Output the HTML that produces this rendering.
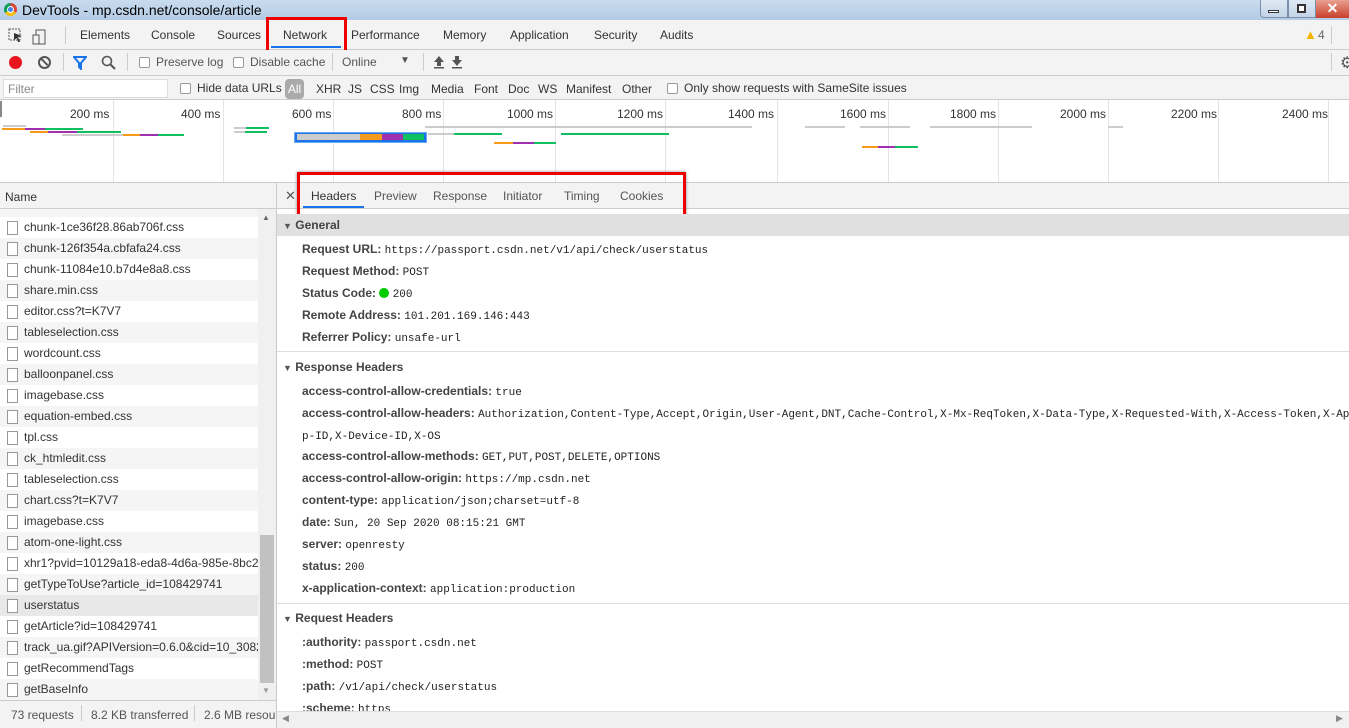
<!DOCTYPE html>
<html><head><meta charset="utf-8"><style>
*{margin:0;padding:0;box-sizing:border-box}
body{width:1349px;height:728px;overflow:hidden;position:relative;font-family:"Liberation Sans",sans-serif;font-size:12px;color:#333;background:#fff}
.a{position:absolute;white-space:nowrap}
.k{font-weight:bold;color:#444}
.m{font-family:"Liberation Mono",monospace;font-size:11px;color:#222;font-weight:normal}
.row{position:absolute;left:0;width:258px;height:21px;line-height:21px;padding-left:24px;white-space:nowrap;overflow:hidden}
.row i{position:absolute;left:7px;top:4px;width:11px;height:14px;border:1px solid #999;background:#fff}
.g{position:absolute;top:100px;width:1px;height:82px;background:#e4e4e4}
.lab{position:absolute;top:107px;font-size:12px;color:#333}
.bar{position:absolute;height:2px}
.cb{display:inline-block;width:11px;height:11px;border:1px solid #999;border-radius:2px;background:#fff;vertical-align:-2px;margin-right:6px}
</style></head><body>
<div class="a" style="left:0;top:0;width:1349px;height:20px;background:linear-gradient(#c9dcef,#b3cbe5)"></div>
<div class="a" style="left:4px;top:3px;width:13px;height:13px;border-radius:50%;background:conic-gradient(#db4437 0 33%,#f4c20d 0 66%,#0f9d58 0)"></div>
<div class="a" style="left:8px;top:7px;width:5px;height:5px;border-radius:50%;background:#4285f4;outline:1px solid #fff"></div>
<div class="a" style="left:22px;top:2px;font-size:14px;color:#000">DevTools - mp.csdn.net/console/article</div>
<div class="a" style="left:1260px;top:0;width:28px;height:18px;border:1px solid #7a8fa8;border-top:none;border-radius:0 0 0 4px;background:linear-gradient(#dfe9f5,#c3d3e6)"></div>
<div class="a" style="left:1268px;top:10px;width:11px;height:3px;border:1px solid #333;background:#fff"></div>
<div class="a" style="left:1288px;top:0;width:28px;height:18px;border:1px solid #7a8fa8;border-top:none;background:linear-gradient(#dfe9f5,#c3d3e6)"></div>
<div class="a" style="left:1297px;top:4px;width:9px;height:9px;border:2px solid #333;background:#fff"></div>
<div class="a" style="left:1316px;top:0;width:33px;height:18px;background:linear-gradient(#e9a091,#c9402a);color:#fff;font-weight:bold;font-size:14px;text-align:center;line-height:16px">✕</div>
<div class="a" style="left:0;top:20px;width:1349px;height:30px;background:#f3f3f3;border-bottom:1px solid #ccc"></div>
<svg class="a" style="left:8px;top:27px" width="42" height="18"><rect x="1" y="2" width="11" height="11" fill="none" stroke="#555" stroke-dasharray="2 1"/><path d="M6 6 L14 9 L10 10 L12 15 L10 15 L9 11 L6 13Z" fill="#333"/><rect x="28" y="3" width="9" height="14" fill="none" stroke="#555"/><rect x="25" y="8" width="6" height="9" fill="#f3f3f3" stroke="#555"/></svg>
<div class="a" style="left:65px;top:26px;width:1px;height:18px;background:#ccc"></div>
<div class="a" style="left:80px;top:28px">Elements</div>
<div class="a" style="left:151px;top:28px">Console</div>
<div class="a" style="left:217px;top:28px">Sources</div>
<div class="a" style="left:283px;top:28px">Network</div>
<div class="a" style="left:271px;top:46px;width:70px;height:2px;background:#1a73e8"></div>
<div class="a" style="left:351px;top:28px">Performance</div>
<div class="a" style="left:443px;top:28px">Memory</div>
<div class="a" style="left:510px;top:28px">Application</div>
<div class="a" style="left:594px;top:28px">Security</div>
<div class="a" style="left:660px;top:28px">Audits</div>
<div class="a" style="left:1304px;top:27px;color:#f4b400;font-size:13px">▲</div>
<div class="a" style="left:1318px;top:28px;color:#666">4</div>
<div class="a" style="left:1331px;top:26px;width:1px;height:18px;background:#ccc"></div>
<div class="a" style="left:266px;top:17px;width:81px;height:38px;border:3px solid #e00"></div>
<div class="a" style="left:0;top:50px;width:1349px;height:26px;background:#f3f3f3;border-bottom:1px solid #ccc"></div>
<div class="a" style="left:9px;top:56px;width:13px;height:13px;border-radius:50%;background:#e8141e"></div>
<div class="a" style="left:38px;top:56px;width:13px;height:13px;border-radius:50%;border:2px solid #555"></div>
<div class="a" style="left:40px;top:61px;width:9px;height:2px;background:#555;transform:rotate(45deg)"></div>
<div class="a" style="left:63px;top:53px;width:1px;height:18px;background:#ccc"></div>
<svg class="a" style="left:73px;top:56px" width="14" height="14"><path d="M1 1H13L8 7V13L6 11V7Z" fill="none" stroke="#1a73e8" stroke-width="2"/></svg>
<svg class="a" style="left:101px;top:55px" width="15" height="15"><circle cx="6" cy="6" r="4.5" fill="none" stroke="#555" stroke-width="1.6"/><path d="M9 9L14 14" stroke="#555" stroke-width="2"/></svg>
<div class="a" style="left:127px;top:53px;width:1px;height:18px;background:#ccc"></div>
<div class="a" style="left:139px;top:55px;color:#555"><span class="cb"></span>Preserve log</div>
<div class="a" style="left:233px;top:55px;color:#555"><span class="cb"></span>Disable cache</div>
<div class="a" style="left:332px;top:53px;width:1px;height:18px;background:#ccc"></div>
<div class="a" style="left:342px;top:55px;color:#555">Online</div>
<div class="a" style="left:400px;top:55px;color:#555;font-size:10px">▼</div>
<div class="a" style="left:423px;top:53px;width:1px;height:18px;background:#ccc"></div>
<svg class="a" style="left:433px;top:55px" width="32" height="14"><path d="M6 1L11 7H8V11H4V7H1Z" fill="#555"/><rect x="1" y="12" width="10" height="1.5" fill="#555"/><path d="M24 11L19 5H22V1H26V5H29Z" fill="#555"/><rect x="19" y="12" width="10" height="1.5" fill="#555"/></svg>
<div class="a" style="left:1331px;top:53px;width:1px;height:18px;background:#ccc"></div>
<div class="a" style="left:1340px;top:53px;font-size:16px;color:#555">⚙</div>
<div class="a" style="left:0;top:76px;width:1349px;height:24px;background:#f3f3f3;border-bottom:1px solid #ccc"></div>
<div class="a" style="left:3px;top:79px;width:165px;height:19px;background:#fff;border:1px solid #ddd;color:#888;padding:3px 4px;line-height:13px">Filter</div>
<div class="a" style="left:180px;top:81px"><span class="cb"></span>Hide data URLs</div>
<div class="a" style="left:285px;top:79px;width:19px;height:20px;border-radius:4px;background:#aaa;color:#fff;text-align:center;line-height:20px">All</div>
<div class="a" style="left:316px;top:82px">XHR</div>
<div class="a" style="left:348px;top:82px">JS</div>
<div class="a" style="left:370px;top:82px">CSS</div>
<div class="a" style="left:399px;top:82px">Img</div>
<div class="a" style="left:431px;top:82px">Media</div>
<div class="a" style="left:474px;top:82px">Font</div>
<div class="a" style="left:508px;top:82px">Doc</div>
<div class="a" style="left:538px;top:82px">WS</div>
<div class="a" style="left:566px;top:82px">Manifest</div>
<div class="a" style="left:622px;top:82px">Other</div>
<div class="a" style="left:667px;top:81px"><span class="cb"></span>Only show requests with SameSite issues</div>
<div class="a" style="left:0;top:101px;width:2px;height:16px;background:#888"></div>
<div class="g" style="left:113px"></div><div class="g" style="left:223px"></div><div class="g" style="left:333px"></div><div class="g" style="left:443px"></div><div class="g" style="left:555px"></div><div class="g" style="left:665px"></div><div class="g" style="left:777px"></div><div class="g" style="left:888px"></div><div class="g" style="left:998px"></div><div class="g" style="left:1108px"></div><div class="g" style="left:1218px"></div><div class="g" style="left:1328px"></div>
<div class="lab" style="left:70px">200 ms</div><div class="lab" style="left:181px">400 ms</div><div class="lab" style="left:292px">600 ms</div><div class="lab" style="left:402px">800 ms</div><div class="lab" style="left:507px">1000 ms</div><div class="lab" style="left:617px">1200 ms</div><div class="lab" style="left:728px">1400 ms</div><div class="lab" style="left:840px">1600 ms</div><div class="lab" style="left:950px">1800 ms</div><div class="lab" style="left:1060px">2000 ms</div><div class="lab" style="left:1171px">2200 ms</div><div class="lab" style="left:1282px">2400 ms</div>
<div class="bar" style="left:3px;top:125px;width:23px;background:#ccc"></div>
<div class="bar" style="left:2px;top:128px;width:23px;background:#f59a1a"></div><div class="bar" style="left:25px;top:128px;width:20px;background:#a030b0"></div><div class="bar" style="left:45px;top:128px;width:38px;background:#10c060"></div>
<div class="bar" style="left:30px;top:131px;width:18px;background:#f59a1a"></div><div class="bar" style="left:48px;top:131px;width:29px;background:#a030b0"></div><div class="bar" style="left:77px;top:131px;width:44px;background:#10c060"></div>
<div class="bar" style="left:62px;top:134px;width:61px;background:#ccc"></div><div class="bar" style="left:123px;top:134px;width:17px;background:#f59a1a"></div><div class="bar" style="left:140px;top:134px;width:18px;background:#a030b0"></div><div class="bar" style="left:158px;top:134px;width:26px;background:#10c060"></div>
<div class="bar" style="left:234px;top:127px;width:12px;background:#ccc"></div><div class="bar" style="left:246px;top:127px;width:23px;background:#10c060"></div>
<div class="bar" style="left:234px;top:131px;width:11px;background:#ccc"></div><div class="bar" style="left:245px;top:131px;width:22px;background:#10c060"></div>
<div class="bar" style="left:425px;top:126px;width:327px;background:#ccc"></div>
<div class="bar" style="left:805px;top:126px;width:40px;background:#ccc"></div><div class="bar" style="left:860px;top:126px;width:50px;background:#ccc"></div><div class="bar" style="left:930px;top:126px;width:102px;background:#ccc"></div><div class="bar" style="left:1108px;top:126px;width:15px;background:#ccc"></div>
<div class="a" style="left:294px;top:132px;width:133px;height:11px;background:#1a73e8;border:1px solid #6aa8f0"></div>
<div class="a" style="left:297px;top:134px;width:63px;height:6px;background:#ccc"></div><div class="a" style="left:360px;top:134px;width:22px;height:6px;background:#f59a1a"></div><div class="a" style="left:382px;top:134px;width:21px;height:6px;background:#a030b0"></div><div class="a" style="left:403px;top:134px;width:21px;height:6px;background:#10c060"></div>
<div class="bar" style="left:428px;top:133px;width:26px;background:#ccc"></div><div class="bar" style="left:454px;top:133px;width:48px;background:#10c060"></div>
<div class="bar" style="left:561px;top:133px;width:108px;background:#10c060"></div>
<div class="bar" style="left:494px;top:142px;width:19px;background:#f59a1a"></div><div class="bar" style="left:513px;top:142px;width:21px;background:#a030b0"></div><div class="bar" style="left:534px;top:142px;width:22px;background:#10c060"></div>
<div class="bar" style="left:862px;top:146px;width:16px;background:#f59a1a"></div><div class="bar" style="left:878px;top:146px;width:17px;background:#a030b0"></div><div class="bar" style="left:895px;top:146px;width:23px;background:#10c060"></div>
<div class="a" style="left:0;top:182px;width:1349px;height:1px;background:#ccc"></div>
<div class="row" style="top:205px;height:12px;background:#f5f5f5"></div>
<div class="a" style="left:0;top:183px;width:276px;height:26px;background:#f3f3f3;border-bottom:1px solid #ccc"></div>
<div class="a" style="left:5px;top:190px">Name</div>
<div class="a" style="left:276px;top:183px;width:1px;height:545px;background:#ccc"></div>
<div class="row" style="top:217px;background:#fff"><i></i>chunk-1ce36f28.86ab706f.css</div>
<div class="row" style="top:238px;background:#f5f5f5"><i></i>chunk-126f354a.cbfafa24.css</div>
<div class="row" style="top:259px;background:#fff"><i></i>chunk-11084e10.b7d4e8a8.css</div>
<div class="row" style="top:280px;background:#f5f5f5"><i></i>share.min.css</div>
<div class="row" style="top:301px;background:#fff"><i></i>editor.css?t=K7V7</div>
<div class="row" style="top:322px;background:#f5f5f5"><i></i>tableselection.css</div>
<div class="row" style="top:343px;background:#fff"><i></i>wordcount.css</div>
<div class="row" style="top:364px;background:#f5f5f5"><i></i>balloonpanel.css</div>
<div class="row" style="top:385px;background:#fff"><i></i>imagebase.css</div>
<div class="row" style="top:406px;background:#f5f5f5"><i></i>equation-embed.css</div>
<div class="row" style="top:427px;background:#fff"><i></i>tpl.css</div>
<div class="row" style="top:448px;background:#f5f5f5"><i></i>ck_htmledit.css</div>
<div class="row" style="top:469px;background:#fff"><i></i>tableselection.css</div>
<div class="row" style="top:490px;background:#f5f5f5"><i></i>chart.css?t=K7V7</div>
<div class="row" style="top:511px;background:#fff"><i></i>imagebase.css</div>
<div class="row" style="top:532px;background:#f5f5f5"><i></i>atom-one-light.css</div>
<div class="row" style="top:553px;background:#fff"><i></i>xhr1?pvid=10129a18-eda8-4d6a-985e-8bc2</div>
<div class="row" style="top:574px;background:#f5f5f5"><i></i>getTypeToUse?article_id=108429741</div>
<div class="row" style="top:595px;background:#e8e8e8"><i></i>userstatus</div>
<div class="row" style="top:616px;background:#fff"><i></i>getArticle?id=108429741</div>
<div class="row" style="top:637px;background:#f5f5f5"><i></i>track_ua.gif?APIVersion=0.6.0&amp;cid=10_3082</div>
<div class="row" style="top:658px;background:#fff"><i></i>getRecommendTags</div>
<div class="row" style="top:679px;background:#f5f5f5"><i></i>getBaseInfo</div>
<div class="a" style="left:258px;top:209px;width:18px;height:491px;background:#f0f0f0"></div>
<div class="a" style="left:262px;top:213px;font-size:8px;color:#666">▲</div>
<div class="a" style="left:262px;top:686px;font-size:8px;color:#999">▼</div>
<div class="a" style="left:260px;top:535px;width:14px;height:148px;background:#c1c1c1"></div>
<div class="a" style="left:0;top:700px;width:276px;height:28px;background:#f3f3f3;border-top:1px solid #ccc"></div>
<div class="a" style="left:11px;top:708px;color:#555">73 requests</div>
<div class="a" style="left:81px;top:705px;width:1px;height:16px;background:#ccc"></div>
<div class="a" style="left:91px;top:708px;color:#555">8.2 KB transferred</div>
<div class="a" style="left:194px;top:705px;width:1px;height:16px;background:#ccc"></div>
<div class="a" style="left:204px;top:708px;color:#555;width:72px;overflow:hidden">2.6 MB resources</div>
<div class="a" style="left:277px;top:183px;width:1072px;height:26px;background:#f3f3f3;border-bottom:1px solid #ccc"></div>
<div class="a" style="left:285px;top:188px;color:#555;font-size:13px">✕</div>
<div class="a" style="left:311px;top:189px">Headers</div>
<div class="a" style="left:303px;top:206px;width:61px;height:2px;background:#1a73e8"></div>
<div class="a" style="left:374px;top:189px;color:#555">Preview</div>
<div class="a" style="left:433px;top:189px;color:#555">Response</div>
<div class="a" style="left:503px;top:189px;color:#555">Initiator</div>
<div class="a" style="left:564px;top:189px;color:#555">Timing</div>
<div class="a" style="left:620px;top:189px;color:#555">Cookies</div>
<div class="a" style="left:297px;top:172px;width:389px;height:47px;border:3px solid #e00;box-shadow:0 0 3px #888"></div>
<div class="a" style="left:277px;top:214px;width:1072px;height:22px;background:#e0e0e0"></div>
<div class="a k" style="left:283px;top:218px"><span style="font-size:9px;color:#555">▼</span> General</div>
<div class="a k" style="left:302px;top:242px">Request URL: <span class="m">https://passport.csdn.net/v1/api/check/userstatus</span></div>
<div class="a k" style="left:302px;top:264px">Request Method: <span class="m">POST</span></div>
<div class="a k" style="left:302px;top:286px">Status Code: <span style="display:inline-block;width:10px;height:10px;border-radius:50%;background:#0c0;vertical-align:-1px"></span> <span class="m">200</span></div>
<div class="a k" style="left:302px;top:308px">Remote Address: <span class="m">101.201.169.146:443</span></div>
<div class="a k" style="left:302px;top:330px">Referrer Policy: <span class="m">unsafe-url</span></div>
<div class="a" style="left:277px;top:351px;width:1072px;height:1px;background:#ddd"></div>
<div class="a k" style="left:283px;top:360px"><span style="font-size:9px;color:#555">▼</span> Response Headers</div>
<div class="a k" style="left:302px;top:384px">access-control-allow-credentials: <span class="m">true</span></div>
<div class="a k" style="left:302px;top:406px">access-control-allow-headers: <span class="m">Authorization,Content-Type,Accept,Origin,User-Agent,DNT,Cache-Control,X-Mx-ReqToken,X-Data-Type,X-Requested-With,X-Access-Token,X-Ap</span></div>
<div class="a k" style="left:302px;top:428px"><span class="m">p-ID,X-Device-ID,X-OS</span></div>
<div class="a k" style="left:302px;top:449px">access-control-allow-methods: <span class="m">GET,PUT,POST,DELETE,OPTIONS</span></div>
<div class="a k" style="left:302px;top:471px">access-control-allow-origin: <span class="m">https://mp.csdn.net</span></div>
<div class="a k" style="left:302px;top:493px">content-type: <span class="m">application/json;charset=utf-8</span></div>
<div class="a k" style="left:302px;top:515px">date: <span class="m">Sun, 20 Sep 2020 08:15:21 GMT</span></div>
<div class="a k" style="left:302px;top:537px">server: <span class="m">openresty</span></div>
<div class="a k" style="left:302px;top:559px">status: <span class="m">200</span></div>
<div class="a k" style="left:302px;top:581px">x-application-context: <span class="m">application:production</span></div>
<div class="a" style="left:277px;top:603px;width:1072px;height:1px;background:#ddd"></div>
<div class="a k" style="left:283px;top:611px"><span style="font-size:9px;color:#555">▼</span> Request Headers</div>
<div class="a k" style="left:302px;top:635px">:authority: <span class="m">passport.csdn.net</span></div>
<div class="a k" style="left:302px;top:657px">:method: <span class="m">POST</span></div>
<div class="a k" style="left:302px;top:679px">:path: <span class="m">/v1/api/check/userstatus</span></div>
<div class="a k" style="left:302px;top:701px">:scheme: <span class="m">https</span></div>
<div class="a" style="left:277px;top:711px;width:1072px;height:17px;background:#f0f0f0;border-top:1px solid #ddd"></div>
<div class="a" style="left:282px;top:713px;font-size:9px;color:#888">◀</div>
<div class="a" style="left:1336px;top:713px;font-size:9px;color:#888">▶</div>
</body></html>
